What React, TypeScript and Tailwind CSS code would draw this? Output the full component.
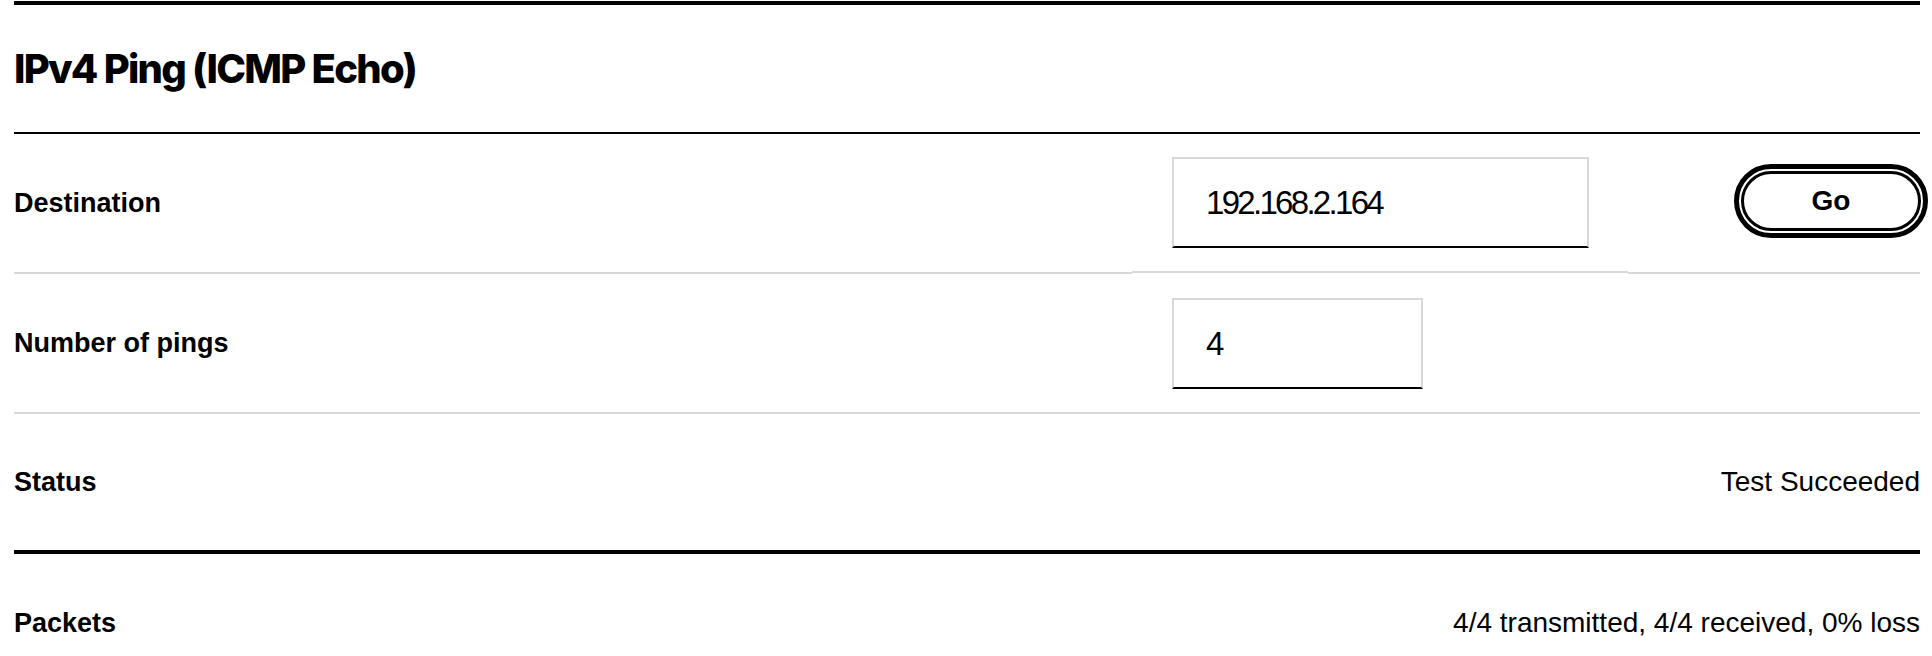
import React from "react";

const font = { fontFamily: '"Liberation Sans", Arial, sans-serif' };
const headFont = { fontFamily: 'Inter, "Liberation Sans", Arial, sans-serif' };

export default function App() {
  return (
    <div className="min-h-screen bg-white text-black" style={font}>
      <div className="pl-[14px] pr-[12px] pt-px">
        <div className="border-t-4 border-black pt-[44px] pb-[43px]">
          <h1 className="text-[40px] leading-none font-extrabold tracking-[-1.75px]" style={headFont}>
            IPv4 Ping (ICMP Echo)
          </h1>
        </div>
        <div className="border-t-2 border-black">
          {/* Destination row */}
          <div className="flex items-start">
            <div className="w-[1118px] h-[140px] flex items-center border-b-2 border-[#d8d8d8]">
              <span className="text-[27px] font-bold leading-none">Destination</span>
            </div>
            <div className="w-[496px] h-[139px] flex items-center pl-[40px] border-b-2 border-[#d8d8d8]">
              <div className="w-[417px] h-[91px] flex items-center pl-[32px] border-2 border-[#d8d8d8] border-b-black">
                <span className="text-[33px] leading-none tracking-[-2.7px]">192.168.2.164</span>
              </div>
            </div>
            <div className="flex-1 h-[140px] flex items-center justify-end border-b-2 border-[#d8d8d8]">
              <button className="w-[180px] h-[60px] -mr-px -mt-[4px] rounded-full border-[3px] border-black bg-white outline-[5px] outline-black outline-offset-2 text-[28px] font-bold leading-none">
                Go
              </button>
            </div>
          </div>
          {/* Number of pings row */}
          <div className="h-[140px] flex items-center border-b-2 border-[#d8d8d8]">
            <div className="w-[1158px] flex items-center">
              <span className="text-[27px] font-bold leading-none">Number of pings</span>
            </div>
            <div className="w-[251px] h-[91px] flex items-center pl-[32px] border-2 border-[#d8d8d8] border-b-black">
              <span className="text-[33px] leading-none">4</span>
            </div>
          </div>
          {/* Status row */}
          <div className="h-[140px] flex items-center justify-between border-b-4 border-black">
            <span className="text-[27px] font-bold leading-none">Status</span>
            <span className="text-[28px] leading-none">Test Succeeded</span>
          </div>
          {/* Packets row */}
          <div className="h-[138px] flex items-center justify-between">
            <span className="text-[27px] font-bold leading-none">Packets</span>
            <span className="text-[28px] leading-none">4/4 transmitted, 4/4 received, 0% loss</span>
          </div>
        </div>
      </div>
    </div>
  );
}
